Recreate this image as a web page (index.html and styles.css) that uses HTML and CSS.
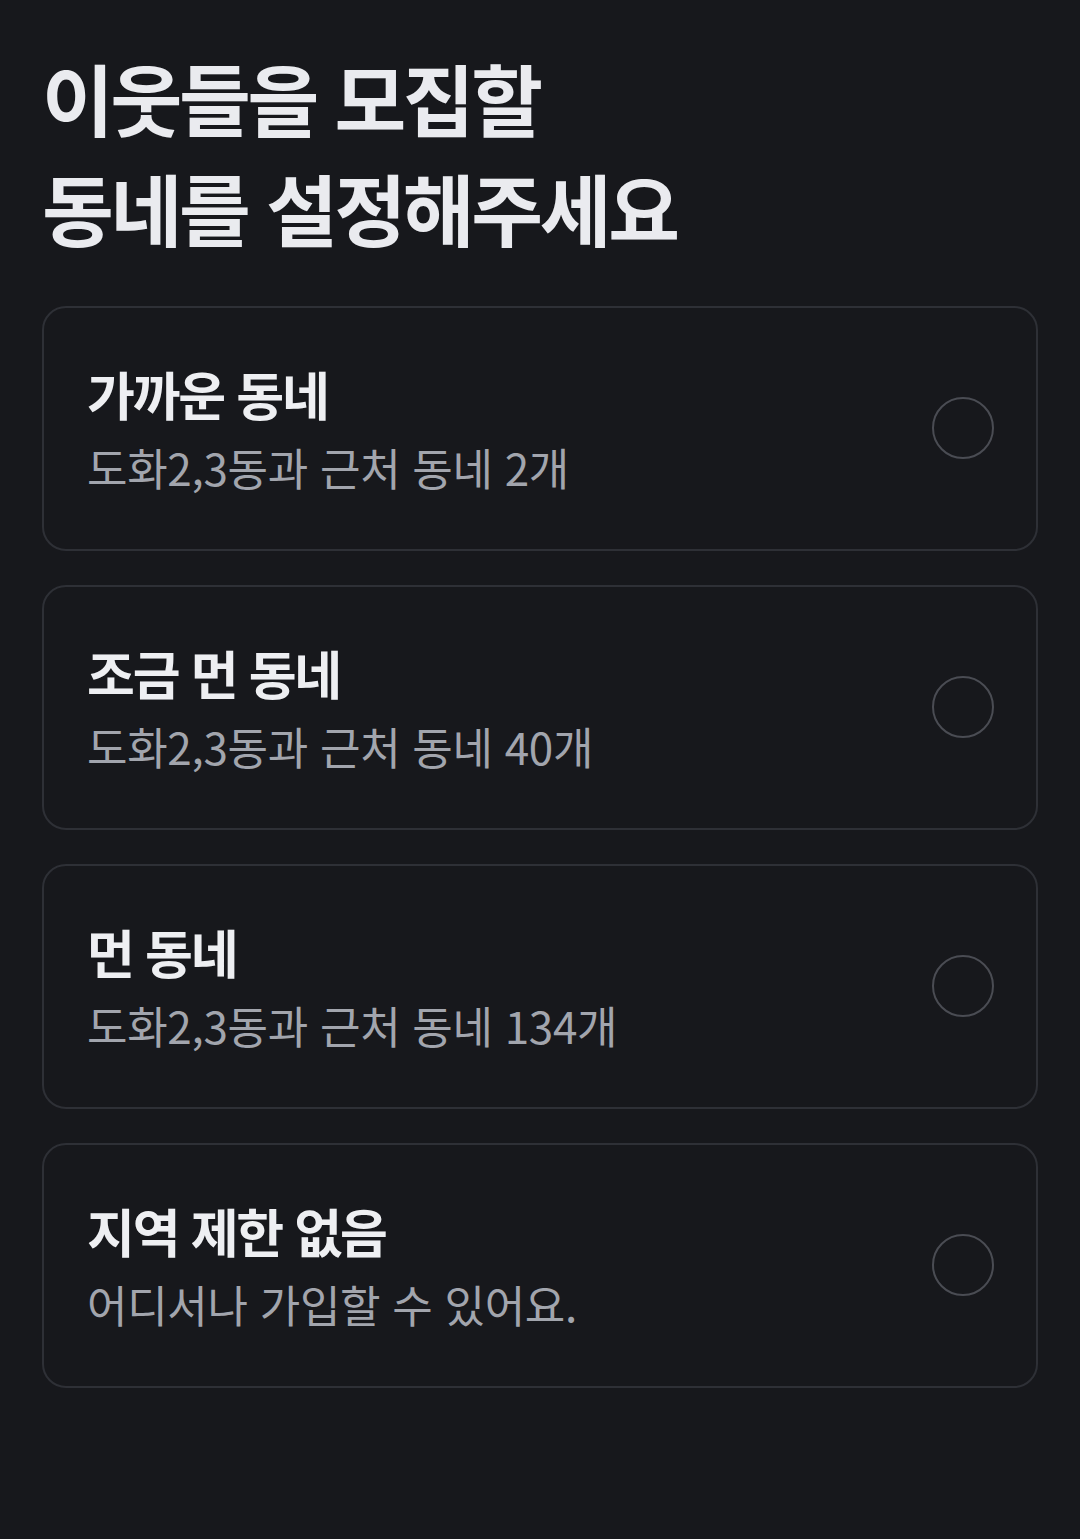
FILE: index.html
```html
<!DOCTYPE html>
<html lang="ko">
<head>
<meta charset="utf-8">
<link rel="stylesheet" href="styles.css">
</head>
<body>
<main class="page">
  <h1 class="title">이웃들을 모집할<br>동네를 설정해주세요</h1>
  <ul class="options">
    <li class="option">
      <div class="texts">
        <div class="opt-title">가까운 동네</div>
        <div class="opt-sub">도화2,3동과 근처 동네 2개</div>
      </div>
      <span class="radio"></span>
    </li>
    <li class="option">
      <div class="texts">
        <div class="opt-title">조금 먼 동네</div>
        <div class="opt-sub">도화2,3동과 근처 동네 40개</div>
      </div>
      <span class="radio"></span>
    </li>
    <li class="option">
      <div class="texts">
        <div class="opt-title">먼 동네</div>
        <div class="opt-sub">도화2,3동과 근처 동네 134개</div>
      </div>
      <span class="radio"></span>
    </li>
    <li class="option">
      <div class="texts">
        <div class="opt-title">지역 제한 없음</div>
        <div class="opt-sub">어디서나 가입할 수 있어요.</div>
      </div>
      <span class="radio"></span>
    </li>
  </ul>
</main>
</body>
</html>
```
FILE: styles.css
```css
html, body {
  margin: 0;
  padding: 0;
  background: #17181c;
}
body {
  font-family: "Noto Sans CJK KR", "Noto Sans", sans-serif;
  color: #eaebef;
  width: 1080px;
  height: 1539px;
}
.page {
  padding: 42px 42px 0 42px;
}
.title {
  margin: 0;
  font-size: 78px;
  line-height: 110px;
  font-weight: 700;
  letter-spacing: -3.3px;
  color: #eaebef;
}
.options {
  list-style: none;
  margin: 44px 0 0 0;
  padding: 0;
  display: flex;
  flex-direction: column;
  gap: 34px;
}
.option {
  height: 245px;
  box-sizing: border-box;
  border: 2px solid #2e3036;
  border-radius: 24px;
  display: flex;
  align-items: center;
  justify-content: space-between;
  padding: 0 42px 0 43px;
}
.texts {
  display: flex;
  flex-direction: column;
}
.opt-title {
  font-size: 52px;
  font-weight: 700;
  line-height: 76px;
  letter-spacing: -2.2px;
  color: #eeeff2;
}
.opt-sub {
  font-size: 44px;
  font-weight: 400;
  line-height: 70px;
  letter-spacing: -0.3px;
  color: #a2a5ad;
}
.radio {
  width: 62px;
  height: 62px;
  box-sizing: border-box;
  border: 2px solid #4a4c53;
  border-radius: 50%;
  margin-bottom: 2px;
}
```
